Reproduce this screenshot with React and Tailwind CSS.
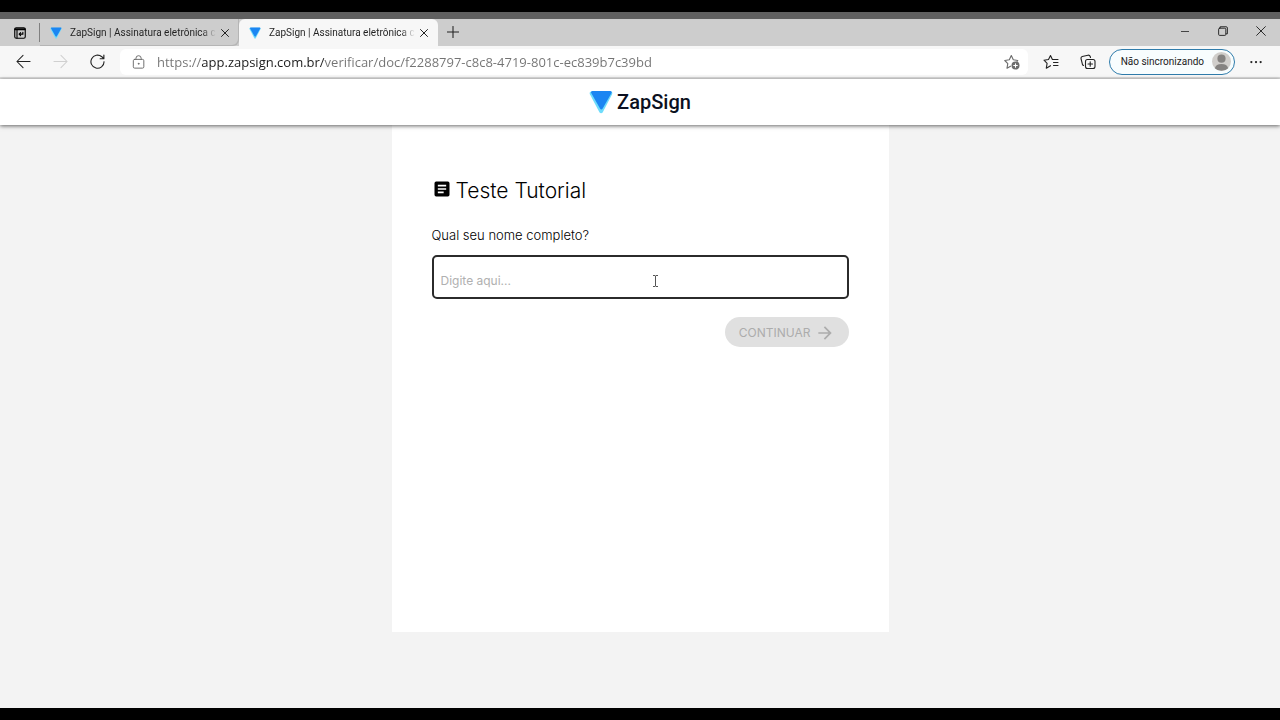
import React from "react";

function ZapMark({ className }) {
  return (
    <svg viewBox="0 0 24 24" className={className} aria-hidden="true">
      <path d="M2.6 1.5h18.8c1.6 0 2.4 1.3 1.7 2.7l-9.3 18c-.8 1.5-2.6 1.5-3.4 0L.9 4.2C.2 2.8 1 1.5 2.6 1.5z" fill="#6fdcfb" />
      <path d="M3.400 1h18c1.200 0 1.700 1 1.100 2l-8.800 15.600c-.7 1.300-2 1.300-2.700 0L2.200 3C1.700 2 2.200 1 3.400 1z" fill="#1c86f2" />
    </svg>
  );
}

function Icon({ size = "size-4", width = 1.1, children }) {
  return (
    <svg
      viewBox="0 0 16 16"
      className={`${size} block shrink-0`}
      fill="none"
      stroke="currentColor"
      strokeWidth={width}
      strokeLinecap="round"
      strokeLinejoin="round"
      aria-hidden="true"
    >
      {children}
    </svg>
  );
}

function Tab({ active }) {
  return (
    <div
      className={
        active
          ? "flex h-full w-[199px] items-center rounded-t-md bg-[#f7f7f7] pr-[2px] pl-[10px]"
          : "flex h-full w-[199px] items-center rounded-br-md pr-[2px] pl-[10px] shadow-[inset_-1px_-1px_0_#b5b5b5]"
      }
    >
      <button role="tab" aria-selected={active} className="flex min-w-0 flex-1 items-center gap-2">
        <ZapMark className="size-3 shrink-0" />
        <span className="whitespace-nowrap bg-linear-to-r from-[#202020] from-90% to-transparent bg-clip-text font-[Roboto,sans-serif] text-[10px] leading-4 text-transparent">
          ZapSign | Assinatura eletrônica c
        </span>
      </button>
      <button aria-label="Fechar guia" className="grid size-6 shrink-0 place-items-center text-[#222]">
        <Icon size="size-2" width={2}>
          <path d="M1 1l14 14M15 1L1 15" />
        </Icon>
      </button>
    </div>
  );
}

function TabStrip() {
  return (
    <div className="flex h-[27px] items-stretch bg-[#cdcdcd]">
      <button aria-label="Menu de guias" className="grid w-[39px] place-items-center text-black">
        <Icon size="size-3" width={1.500}>
          <rect x="1" y="1" width="14" height="14" rx="2" />
          <path d="M1.500 3h13" strokeWidth="2.400" />
          <path d="M4 4v10.500" />
          <path d="M11.800 7v2.500H7M8.800 7.500l-2 2 2 2" />
        </Icon>
      </button>
      <span className="my-1 w-px self-stretch bg-[#808080]" />
      <div role="tablist" className="flex h-full items-stretch">
        <Tab active={false} />
        <Tab active />
      </div>
      <button aria-label="Nova guia" className="grid w-[30px] place-items-center pb-px text-[#222]">
        <Icon size="size-3" width={1.4}>
          <path d="M8 0.500v15M0.500 8h15" />
        </Icon>
      </button>
      <div className="ml-auto flex text-[#222]">
        <button aria-label="Minimizar" className="grid w-[38px] place-items-center pb-1">
          <Icon size="size-2" width={1.6}>
            <path d="M0 9h16" />
          </Icon>
        </button>
        <button aria-label="Restaurar" className="grid w-[38px] place-items-center pb-1">
          <Icon size="size-[10px]" width={1.500}>
            <rect x="1" y="3.500" width="11.500" height="11.500" rx="1.500" />
            <path d="M3.500 3V1.200H13q2 0 2 2v9.300h-2" />
          </Icon>
        </button>
        <button aria-label="Fechar" className="grid w-[38px] place-items-center pb-1">
          <Icon size="size-[10px]" width={1.500}>
            <path d="M1 1l14 14M15 1L1 15" />
          </Icon>
        </button>
      </div>
    </div>
  );
}

function Toolbar() {
  return (
    <div className="flex h-[33px] items-center border-b-2 border-[#dcdcdc] bg-[#f7f7f7] pr-[3px] pl-[5px]">
      <div className="flex w-[115px] shrink-0 text-[#222]">
        <button aria-label="Voltar" className="grid h-6 w-9 place-items-center">
          <Icon size="size-[15px]">
            <path d="M1 8h14M7.500 1.500L1 8l6.500 6.500" />
          </Icon>
        </button>
        <button aria-label="Avançar" disabled className="grid h-6 w-[38px] place-items-center text-[#d0d0d0]">
          <Icon size="size-[15px]">
            <path d="M1 8h14M8.500 1.500L15 8l-6.500 6.500" />
          </Icon>
        </button>
        <button aria-label="Atualizar" className="grid h-6 w-9 place-items-center">
          <Icon size="size-[15px]" width={1.200}>
            <path d="M15 8.200a7 7 0 1 1-2.400-5.300L14.500 4.800M14.800 1v4h-4" />
          </Icon>
        </button>
      </div>
      <div className="flex h-[26px] min-w-0 flex-1 items-center rounded-md bg-white pr-2 pl-3">
        <span className="text-[#6b6b6b]">
          <Icon size="size-[14px]">
            <rect x="1.500" y="5" width="12" height="10" rx="1.500" />
            <path d="M4.500 5V3.800a3 3 0 0 1 6 0V5" />
            <circle cx="7.500" cy="10" r=".5" fill="currentColor" />
          </Icon>
        </span>
        <input
          type="text"
          aria-label="Barra de endereço"
          defaultValue="https://app.zapsign.com.br/verificar/doc/f2288797-c8c8-4719-801c-ec839b7c39bd"
          className="ml-[11px] h-6 min-w-0 flex-1 bg-[linear-gradient(90deg,#737373_45px,#1b1b1b_45px,#1b1b1b_167px,#737373_167px)] bg-clip-text text-[13px] text-transparent outline-none"
        />
        <button aria-label="Adicionar aos favoritos" className="text-[#6b6b6b]">
          <Icon>
            <path d="M6.500 12.200l-3.500 2 .8-4.600L.8 6.500l4.500-.7 2-4.200 2 4.200 4.500.7-.8.900" />
            <circle cx="11.500" cy="11.500" r="4" fill="currentColor" stroke="none" />
            <path d="M11.500 9.700v3.600M9.700 11.500h3.600" stroke="#fff" />
          </Icon>
        </button>
      </div>
      <div className="flex shrink-0 items-center pl-1 text-[#222]">
        <button aria-label="Favoritos" className="grid h-6 w-[38px] place-items-center">
          <Icon>
            <path d="M7.500 11.700l-4.200 2.500.8-4.900L1 6.200l4.500-.7 2-4 1.900 4H15M10.500 8.500H15M10.500 11.500H15" />
          </Icon>
        </button>
        <button aria-label="Coleções" className="grid h-6 w-9 place-items-center">
          <Icon>
            <rect x="5.500" y="5.500" width="9.500" height="9" rx="2" />
            <path d="M10.200 7.800v4.500M8 10h4.500M3.500 11.500l-1-.8L1 4.500Q.8 3 2.200 2.500L8 1.200q1.700-.2 2.200 1.300l.3 1" />
          </Icon>
        </button>
        <button className="ml-[3px] flex h-[26px] items-center gap-2 rounded-full border border-[#2f7cab] bg-[#f8fdfe] pr-[3px] pl-[11px] font-[Roboto,sans-serif] text-[10px]">
          <span className="whitespace-nowrap">Não sincronizando</span>
          <svg viewBox="0 0 20 20" className="size-[19px]" aria-hidden="true">
            <circle cx="10" cy="10" r="10" fill="#d0cecb" />
            <circle cx="10" cy="7" r="4.300" fill="#858381" />
            <path d="M3 17q1-4.500 7-4.500t7 4.500a10 10 0 0 1-14 0z" fill="#858381" />
          </svg>
        </button>
        <button aria-label="Configurações e mais" className="grid h-6 w-[42px] place-items-center">
          <Icon size="size-3">
            <g fill="currentColor" stroke="none">
              <circle cx="1.800" cy="8" r="1.500" />
              <circle cx="8" cy="8" r="1.500" />
              <circle cx="14.200" cy="8" r="1.500" />
            </g>
          </Icon>
        </button>
      </div>
    </div>
  );
}

function TextCursor() {
  return (
    <svg viewBox="0 0 7 12" className="absolute top-5 left-[220px] h-3 w-[7px]" fill="none" stroke="#555" aria-hidden="true">
      <path d="M1 .5h2l.5.500.5-.5h2M3.500 1v10M1 11.500h2l.5-.5.5.500h2" />
    </svg>
  );
}

export default function App() {
  return (
    <div className="flex min-h-screen flex-col border-y-12 border-black bg-[#f3f3f3] font-['Open_Sans','Noto_Sans',sans-serif]">
      <div className="h-[7px] bg-[#606060]" />
      <TabStrip />
      <Toolbar />
      <header className="relative flex h-[46px] items-center justify-center gap-1 bg-white shadow-[0_1px_4px_rgba(0,0,0,0.6)]">
        <ZapMark className="size-6" />
        <span className="font-[Roboto,sans-serif] text-xl font-medium text-[#0b1020]">ZapSign</span>
      </header>
      <main className="mx-auto mb-[76px] w-full max-w-[497px] flex-1 bg-white px-10 pt-[50px] font-[Inter,sans-serif]">
        <h1 className="flex items-center text-[21px] leading-8 font-light text-black">
          <svg viewBox="0 0 24 24" className="mr-1 mb-1 size-5" aria-hidden="true">
            <path fillRule="evenodd" d="M19 3H5a2 2 0 0 0-2 2v14a2 2 0 0 0 2 2h14a2 2 0 0 0 2-2V5a2 2 0 0 0-2-2zm-5 14H7v-2h7v2zm3-4H7v-2h10v2zm0-4H7V7h10v2z" />
          </svg>
          Teste Tutorial
        </h1>
        <form onSubmit={(e) => e.preventDefault()}>
          <label htmlFor="nome" className="mt-4 block text-[13px] leading-6 font-light text-black">
            Qual seu nome completo?
          </label>
          <div className="relative mt-2">
            <input
              id="nome"
              type="text"
              placeholder="Digite aqui..."
              className="block h-11 w-full rounded-[5px] border-2 border-[#2b2b2b] bg-white px-[7px] pt-[6px] text-xs text-black outline-none placeholder:text-[#b0b0b0]"
            />
            <TextCursor />
          </div>
          <button
            type="submit"
            disabled
            className="mt-[18px] ml-auto flex h-[30px] items-center gap-1 rounded-full bg-[#e0e0e0] px-[14px] pt-px text-xs text-[#acacac]"
          >
            CONTINUAR
            <svg viewBox="0 0 24 24" className="size-5" fill="currentColor" aria-hidden="true">
              <path d="M12 4l-1.410 1.410L16.170 11H4v2h12.170l-5.580 5.590L12 20l8-8z" />
            </svg>
          </button>
        </form>
      </main>
    </div>
  );
}
